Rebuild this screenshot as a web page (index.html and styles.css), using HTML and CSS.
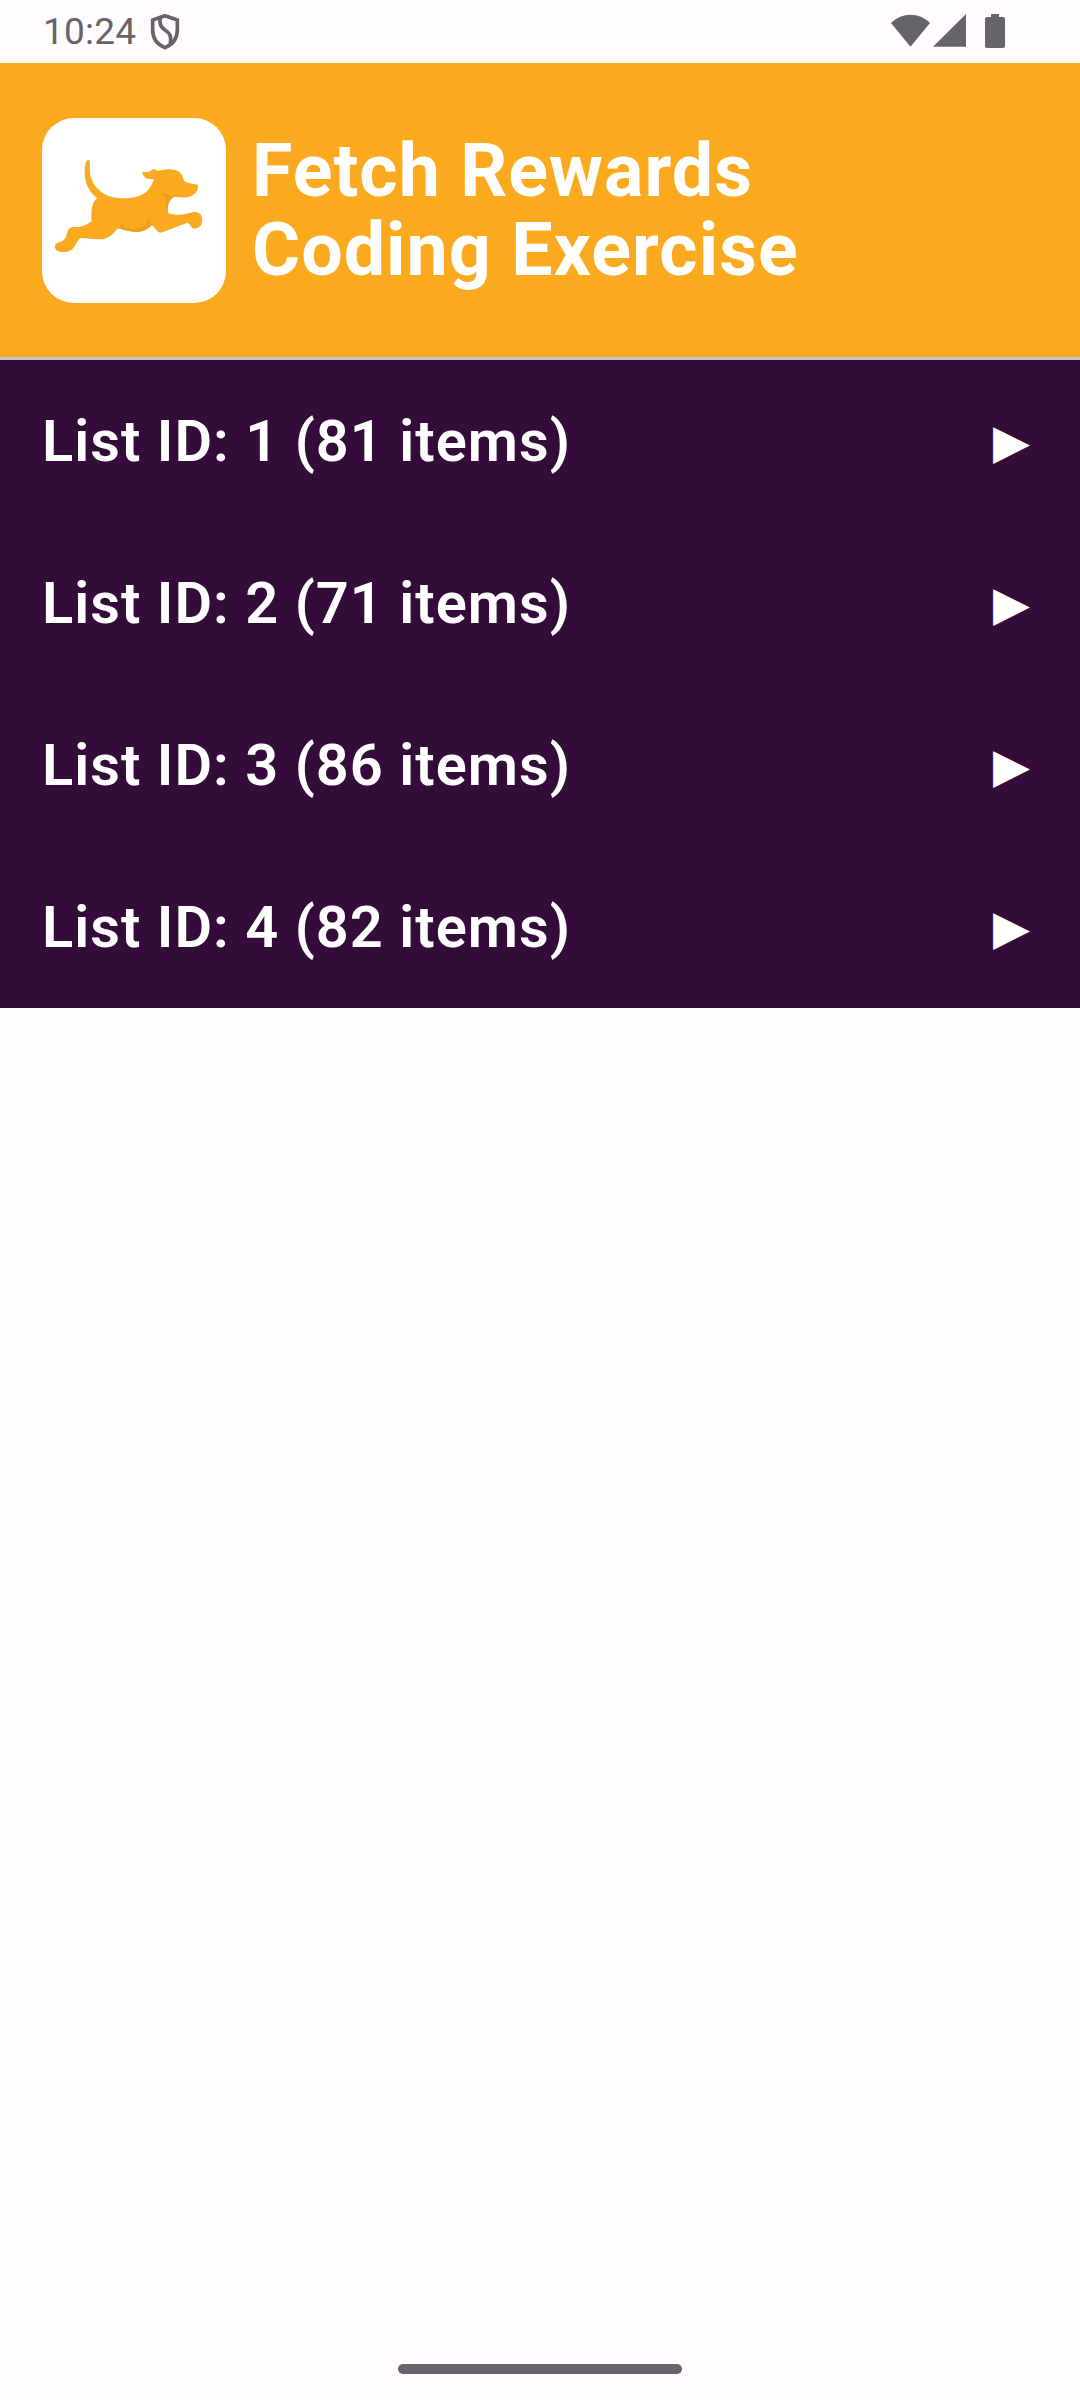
FILE: index.html
```html
<!DOCTYPE html>
<html lang="en">
<head>
<meta charset="utf-8">
<title>Fetch Rewards Coding Exercise</title>
<link rel="stylesheet" href="styles.css">
</head>
<body>
<div class="screen">
  <div class="status">
    <span class="clock">10:24</span>
    <svg class="shield" viewBox="0 0 90 108">
      <path d="M45 5 L82 18 V48 C82 73 67 92 45 101 C23 92 8 73 8 48 V18 Z"/>
      <path d="M31 10 C27 28 31 39 45 48 C60 57 65 67 61 90"/>
    </svg>
    <svg class="system" viewBox="0 0 114 36">
      <path d="M0 9 C11 -2 28 -2 39 9 L19.5 32.7 Z"/>
      <path d="M75 0 V32.7 H42 Z"/>
      <path d="M100 0 H108 V3 H112 Q114 3 114 5 V32 Q114 34 112 34 H96 Q94 34 94 32 V5 Q94 3 96 3 H100 Z"/>
    </svg>
  </div>
  <header class="header">
    <svg class="logo" viewBox="6 6 552 555">
      <path class="dog" d="M144 131 C137 133 133 152 134 174 C136 205 149 229 171 246 C156 260 152 284 155 315 C141 327 121 335 98 333 C82 335 83 350 78 362 C72 376 60 377 50 382 C42 388 43 401 54 406 C65 409 84 410 94 402 C106 393 110 376 121 366 C145 366 170 373 195 368 C213 363 223 349 234 337 C253 343 274 349 299 347 C315 344 327 336 336 327 L355 348 Q361 353 369 348 L440 321 C449 320 450 329 457 336 C466 342 480 334 485 324 C489 309 485 296 477 291 C465 285 450 290 438 294 C421 298 402 297 385 292 C381 272 384 252 402 243 C419 242 437 248 452 241 C468 234 475 222 474 207 C463 203 452 204 440 199 C427 193 431 180 421 171 C410 160 385 158 368 162 C356 166 351 165 344 160 C336 158 333 166 326 168 L307 168 C307 177 315 188 328 189 L341 189 C336 211 323 228 302 238 C280 249 238 250 209 241 C180 231 157 208 150 174 C149 161 151 148 149 135 Q147 131 144 131 Z"/>
      <path class="shade" d="M363 232 Q376 228 384 236 Q391 242 402 243 C388 250 381 268 383 290 C376 276 380 262 377 250 Q372 241 363 232 Z"/>
      <path class="shade" d="M234 337 Q243 331 249 318 C245 345 305 343 317 324 Q324 313 323 301 Q329 310 336 327 C318 345 300 351 273 346 Z"/>
    </svg>
    <h1 class="title">Fetch Rewards<br>Coding Exercise</h1>
  </header>
  <main class="list">
    <div class="row"><span>List ID: 1 (81 items)</span><span class="arrow">▶</span></div>
    <div class="row"><span>List ID: 2 (71 items)</span><span class="arrow">▶</span></div>
    <div class="row"><span>List ID: 3 (86 items)</span><span class="arrow">▶</span></div>
    <div class="row"><span>List ID: 4 (82 items)</span><span class="arrow">▶</span></div>
  </main>
  <div class="home"></div>
</div>
</body>
</html>
```
FILE: styles.css
```css
* { box-sizing: border-box; }
body { margin: 0; background: #fffbff; font-family: Roboto, sans-serif; }
.screen { width: 1080px; height: 2400px; display: flex; flex-direction: column; }
.status { height: 63px; padding: 0 75px 0 43px; display: flex; align-items: flex-start; color: #666468; }
.clock { width: 107px; font-size: 37px; line-height: 63px; letter-spacing: 0.2px; }
.shield { width: 30px; height: 36px; margin-top: 14px; fill: none; stroke: currentColor; stroke-width: 11; }
.system { width: 114px; height: 36px; margin: 14px 0 0 auto; fill: currentColor; }
.header { height: 297px; padding: 1px 42px 0; border-bottom: 3px solid #cbc4cf; background: #fbaa1f; display: flex; align-items: center; gap: 26px; }
.logo { width: 184px; height: 185px; border-radius: 32px; background: #fff; }
.dog { fill: #fbaa1f; }
.shade { fill: #e99f20; }
.title { margin: 0; padding-top: 1px; color: #fff; font-size: 73.5px; line-height: 79px; font-weight: 700; letter-spacing: 1.05px; }
.list { background: #340c3a; color: #fff; }
.row { height: 162px; padding: 0 42px; display: flex; align-items: center; justify-content: space-between; font-size: 57.75px; font-weight: 600; letter-spacing: 1.03px; }
.arrow { font-family: "DejaVu Sans", sans-serif; font-size: 48px; font-weight: 400; line-height: 60px; letter-spacing: 0; margin-right: 8px; }
.home { width: 284px; height: 10px; border-radius: 5px; background: #666468; margin: auto auto 26px; }
```
